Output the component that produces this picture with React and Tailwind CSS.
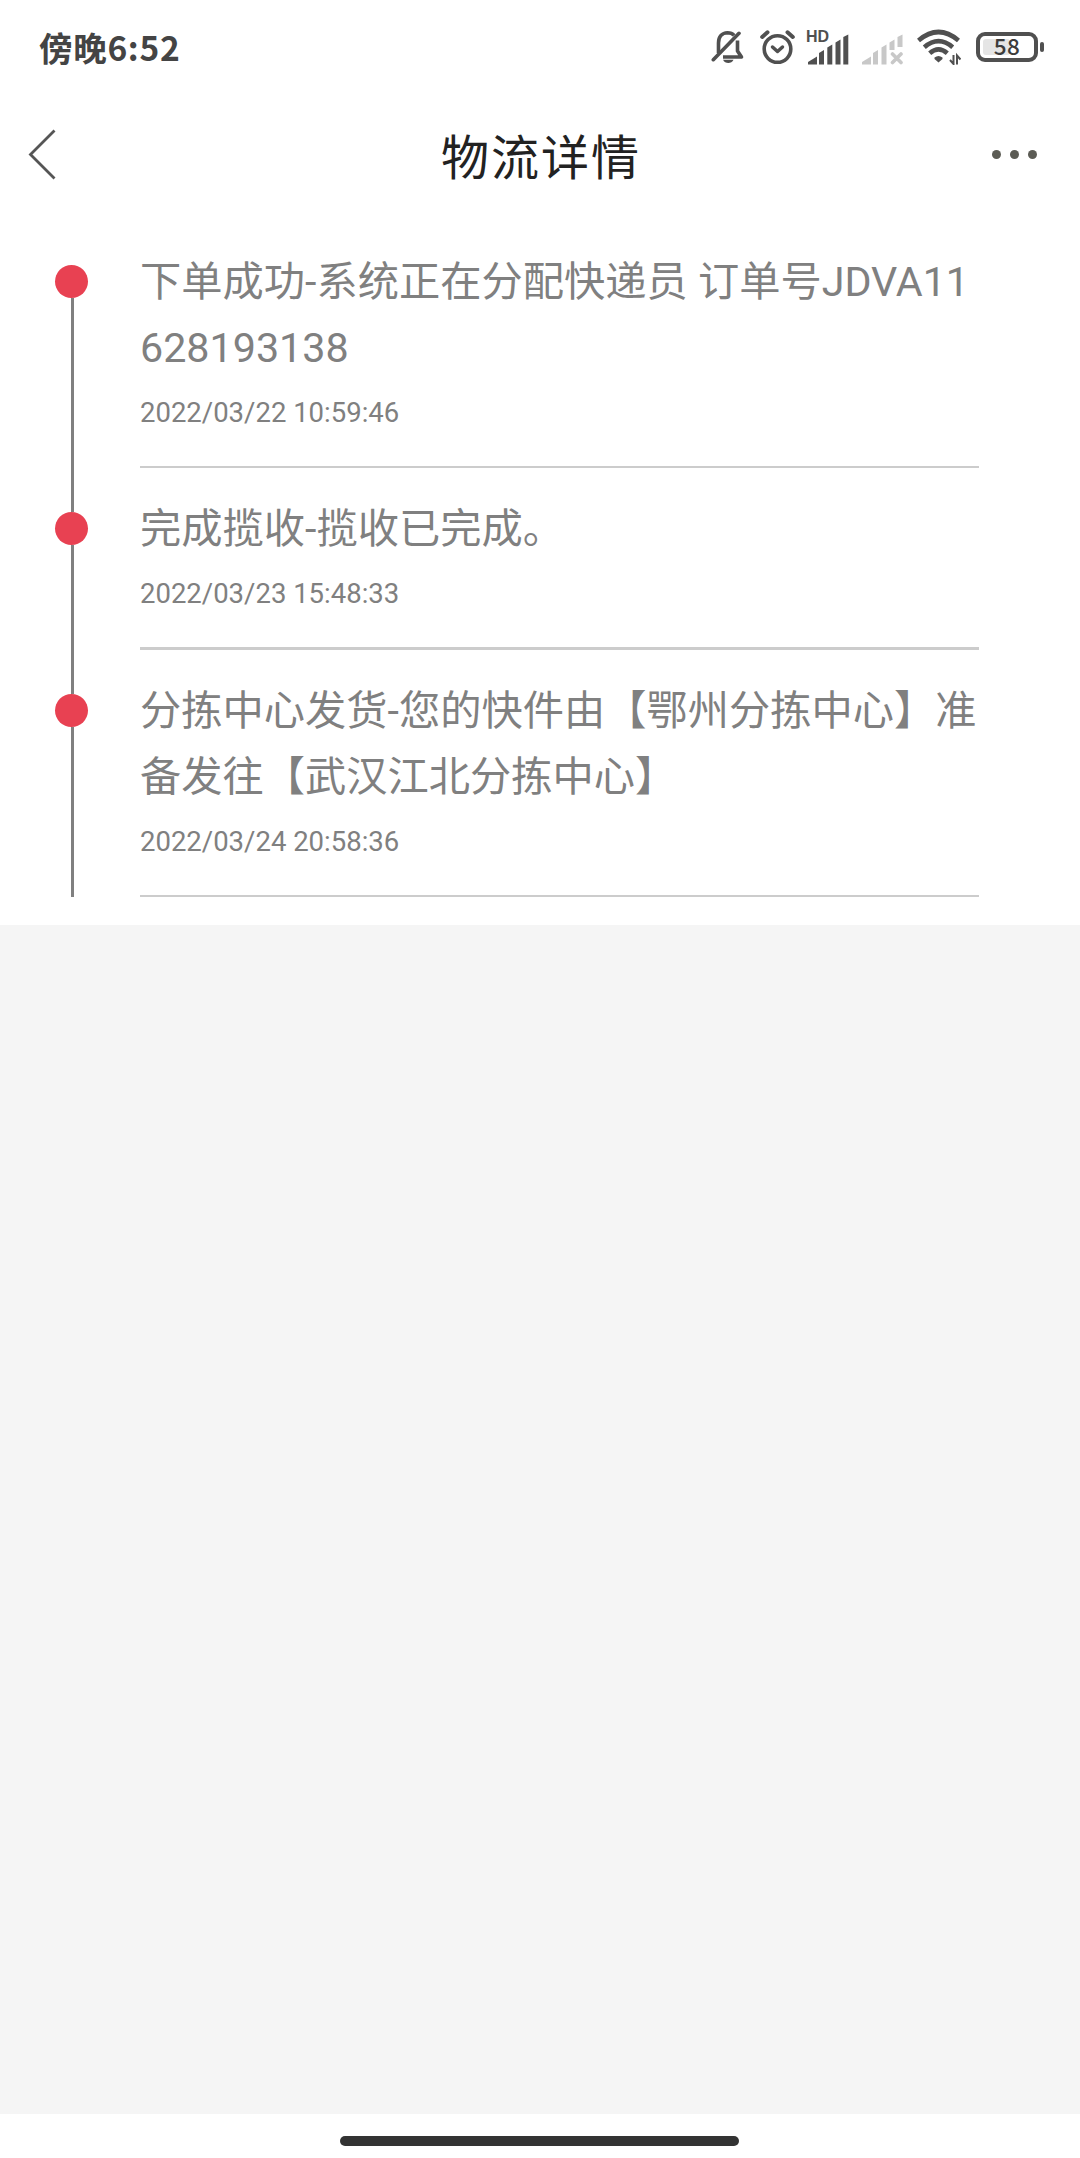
const events = [
  { text: '下单成功-系统正在分配快递员 订单号JDVA11628193138', time: '2022/03/22 10:59:46', border: 'border-b-2' },
  { text: '完成揽收-揽收已完成。', time: '2022/03/23 15:48:33', border: 'border-b-3' },
  { text: '分拣中心发货-您的快件由【鄂州分拣中心】准备发往【武汉江北分拣中心】', time: '2022/03/24 20:58:36', border: 'border-b-2' },
];

function BellOffIcon() {
  return (
    <svg width="34" height="36" viewBox="0 0 34 36" fill="none" stroke="#505050" strokeWidth="3.6">
      <path d="M7.5 24V14C7.5 7.500 11 4 16.500 3.800c3 0 5 .8 6.600 2.600" />
      <path d="M26.500 11.500v10.500l4 6H12" strokeLinejoin="round" />
      <path d="M2.300 30.700L28 4.300" strokeLinecap="round" />
      <path d="M12 30.700h10.500c-1 2.400-3 3.200-5.200 3.200s-4.300-.8-5.300-3.200z" fill="#505050" stroke="none" />
    </svg>
  );
}

function AlarmIcon() {
  return (
    <svg width="36" height="36" viewBox="0 0 36 36" fill="none" stroke="#505050" strokeLinecap="round">
      <circle cx="17.500" cy="20" r="13.300" strokeWidth="3.600" />
      <path d="M12.500 18l5 4.500 5-4.500" strokeWidth="3.500" strokeLinejoin="round" />
      <path d="M2.200 8L7.500 3.300M32.800 8L27.500 3.300" strokeWidth="4" />
    </svg>
  );
}

function SignalBars({ color, weak }) {
  return (
    <svg width="42" height="31" viewBox="0 0 42 31" fill={color} className="absolute bottom-0 left-0">
      <path d="M0 30.500v-2.500l9-5.500v8z" />
      <path d="M11 30.500V19l5-3v14.500z" />
      {weak ? (
        <>
          <path d="M19.500 30.500V13.500l5-3v20z" />
          <path d="M27.500 16V8.500l5-3V16zM35.500 13V3l5-2.500V13z" />
          <path d="M30.500 20l8.500 8.500M39 20l-8.500 8.500" stroke={color} strokeWidth="3.600" strokeLinecap="round" />
        </>
      ) : (
        <path d="M19.300 30.500V13.500l5-3v20zM27.500 30.500V8.500l5-3v25zM35.300 30.500V3l5-2.500v30z" />
      )}
    </svg>
  );
}

function WifiIcon() {
  return (
    <svg width="44" height="36" viewBox="0 0 44 36" fill="none" stroke="#505050">
      <path d="M1.500 11.500Q21.500-5.500 41.500 11.500" strokeWidth="4.600" />
      <path d="M7.300 18.200Q21.500 6 35.700 18.200" strokeWidth="4.600" />
      <path d="M12.700 24.200Q21.500 16.400 30.300 24.200" strokeWidth="4.600" />
      <path d="M17.500 28.500q4-3 8 0v1.500L21.500 33.500 17.500 30z" fill="#505050" stroke="none" />
      <path d="M36.500 26v9l-3.500-4M40 35.500v-9l3.500 4" strokeWidth="2" />
    </svg>
  );
}

function StatusBar() {
  return (
    <div className="flex h-[94px] items-center justify-between pl-[39px] pr-9">
      <span className="whitespace-nowrap font-['Noto_Sans_CJK_SC',sans-serif] text-[33.5px] font-bold leading-[46px] tracking-[0.7px] text-[#444]">
        傍晚6:52
      </span>
      <div className="flex items-center">
        <BellOffIcon />
        <div className="ml-[15px]"><AlarmIcon /></div>
        <div className="relative ml-3 h-9 w-[42px]">
          <span className="absolute -left-[2px] top-0 font-['Liberation_Sans',sans-serif] text-[16px] font-bold leading-[15px] text-[#505050]">HD</span>
          <SignalBars color="#505050" />
        </div>
        <div className="relative ml-3 h-9 w-[42px]">
          <SignalBars color="#c8c8c8" weak />
        </div>
        <div className="ml-[13px]"><WifiIcon /></div>
        <div className="ml-[15px] flex items-center gap-[2px]">
          <div className="relative flex h-[30px] w-[62px] items-center justify-center rounded-[9px] border-4 border-[#505050]">
            <div className="absolute left-[3px] top-[3px] h-4 w-[27px] rounded-[3px] bg-[#e5e5e5]" />
            <span className="relative -top-[1.5px] font-['Noto_Sans_CJK_SC',sans-serif] text-[22.5px] font-medium leading-none tracking-[0.5px] text-[#3c3c3c]">58</span>
          </div>
          <div className="h-[10px] w-1 rounded-sm bg-[#505050]" />
        </div>
      </div>
    </div>
  );
}

function NavBar() {
  return (
    <div className="grid h-[154px] grid-cols-3 items-start pl-7 pr-[43px]">
      <svg width="30" height="54" viewBox="0 0 30 54" fill="none" stroke="#555" strokeWidth="2.8" className="mt-[34px]">
        <path d="M26.500 2.500L2.500 26.500l24 24" />
      </svg>
      <h1 className="mt-[25px] whitespace-nowrap pl-[17px] text-center font-['Noto_Sans_CJK_SC',sans-serif] text-[48px] leading-[70px] tracking-[2px] text-[#222]">
        物流详情
      </h1>
      <div className="mt-14 flex justify-end gap-[9px]">
        <i className="size-[9px] rounded-full bg-[#5c5c55]" />
        <i className="size-[9px] rounded-full bg-[#5c5c55]" />
        <i className="size-[9px] rounded-full bg-[#5c5c55]" />
      </div>
    </div>
  );
}

function TimelineItem({ event }) {
  return (
    <li className="group flex">
      <div className="flex w-[33px] shrink-0 flex-col items-center">
        <div className="h-[17px] w-[3px] shrink-0 translate-x-px bg-[#808080] group-first:bg-transparent" />
        <div className="z-10 size-[33px] shrink-0 rounded-full bg-[#e84152]" />
        <div className="w-[3px] grow translate-x-px bg-[#808080]" />
      </div>
      <div className="ml-[52px] w-[839px] pb-[27px] pt-px group-last:pb-0">
        <p className="break-all text-[41.25px] leading-[66px]">{event.text}</p>
        <p className={`mt-2.5 border-[#ccc] pb-[31px] text-[27.5px] leading-[44px] ${event.border}`}>{event.time}</p>
      </div>
    </li>
  );
}

export default function App() {
  return (
    <div className="flex h-[2158px] w-[1080px] flex-col overflow-hidden bg-[#f5f5f5]">
      <header className="bg-white">
        <StatusBar />
        <NavBar />
      </header>
      <ul className="bg-white pb-7 pl-[55px] font-[Roboto,'Noto_Sans_CJK_SC',sans-serif] text-[#808080]">
        {events.map((event) => (
          <TimelineItem key={event.time} event={event} />
        ))}
      </ul>
      <div className="mt-auto flex h-11 bg-white pl-[340px] pt-[22px]">
        <div className="h-[10px] w-[399px] rounded-full bg-[#333]" />
      </div>
    </div>
  );
}
